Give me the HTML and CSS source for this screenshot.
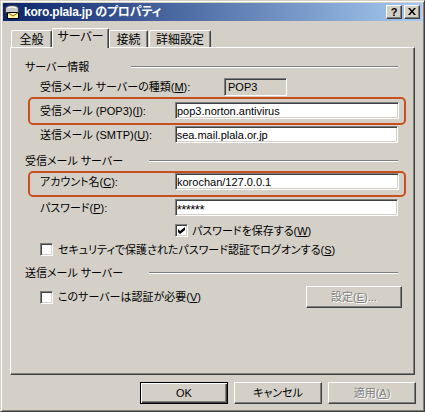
FILE: index.html
```html
<!DOCTYPE html>
<html lang="ja">
<head>
<meta charset="utf-8">
<title>koro.plala.jp のプロパティ</title>
<link rel="stylesheet" href="styles.css">
</head>
<body>
<div class="window">
  <div class="titlebar">
    <svg class="ticon" width="16" height="16" viewBox="0 0 16 16">
      <path d="M1.5 8.5 L1.5 5 Q1.5 1.5 8 1.5 Q14.5 1.5 14.5 5 L14.5 8.5 Z" fill="#c8c8c8" stroke="#404040"/>
      <path d="M3.5 4 Q8 2 12.5 4" stroke="#ffffff" fill="none"/>
      <rect x="3.5" y="8.5" width="11" height="6" fill="#fff5a0" stroke="#000"/>
      <path d="M3.5 8.5 L9 12 L14.5 8.5" fill="none" stroke="#806000"/>
    </svg>
    <span class="title">koro.plala.jp のプロパティ</span>
    <div class="tbtns">
      <span class="tbtn">?</span>
      <span class="tbtn">
        <svg width="8" height="7" viewBox="0 0 8 7"><path d="M0 0h2l2 2.5 2-2.5h2L5 3.5 8 7H6L4 4.5 2 7H0l3-3.5z" fill="#000"/></svg>
      </span>
    </div>
  </div>

  <div class="tabs">
    <div class="tab t1">全般</div>
    <div class="tab t2 active">サーバー</div>
    <div class="tab t3">接続</div>
    <div class="tab t4">詳細設定</div>
  </div>

  <div class="panel">
    <div class="group"><span class="glabel g-short">サーバー情報</span><span class="gline"></span></div>

    <div class="row row-type">
      <span class="lbl lbl-type">受信メール サーバーの種類(<u>M</u>):</span>
      <span class="ro">POP3</span>
    </div>

    <div class="hl hl-a">
      <div class="row">
        <span class="lbl">受信メール (POP3)(<u>I</u>):</span>
        <span class="field">pop3.norton.antivirus</span>
      </div>
    </div>

    <div class="row row-ind row-smtp">
      <span class="lbl">送信メール (SMTP)(<u>U</u>):</span>
      <span class="field">sea.mail.plala.or.jp</span>
    </div>

    <div class="group group-2"><span class="glabel">受信メール サーバー</span><span class="gline"></span></div>

    <div class="hl hl-b">
      <div class="row">
        <span class="lbl">アカウント名(<u>C</u>):</span>
        <span class="field">korochan/127.0.0.1</span>
      </div>
    </div>

    <div class="row row-ind row-pass">
      <span class="lbl">パスワード(<u>P</u>):</span>
      <span class="field field-pass">******</span>
    </div>

    <div class="check check-save">
      <span class="box"><svg width="7" height="7" viewBox="0 0 7 7"><path d="M0 2l2 2 5-4v3L2 7 0 5z" fill="#000"/></svg></span>
      <span class="ctext">パスワードを保存する(<u>W</u>)</span>
    </div>

    <div class="check check-sec">
      <span class="box"></span>
      <span class="ctext">セキュリティで保護されたパスワード認証でログオンする(<u>S</u>)</span>
    </div>

    <div class="group group-3"><span class="glabel">送信メール サーバー</span><span class="gline"></span></div>

    <div class="row-auth">
      <div class="check">
        <span class="box"></span>
        <span class="ctext">このサーバーは認証が必要(<u>V</u>)</span>
      </div>
      <span class="btn btn-set disabled">設定(<u>E</u>)...</span>
    </div>
  </div>

  <div class="buttons">
    <span class="btn default">OK</span>
    <span class="btn">キャンセル</span>
    <span class="btn disabled">適用(<u>A</u>)</span>
  </div>
</div>
</body>
</html>
```

FILE: styles.css
```css
* { box-sizing: border-box; }

html, body {
  margin: 0;
  padding: 0;
}

body {
  width: 425px;
  height: 412px;
  background: #d4d0c8;
  font-family: "Liberation Sans", "Noto Sans CJK JP", sans-serif;
  font-size: 11px;
  line-height: 14px;
  color: #000;
  font-feature-settings: "palt";
}

u { text-decoration: underline; text-underline-offset: 1px; }

.window {
  width: 425px;
  height: 412px;
  background: #d4d0c8;
  border: 1px solid;
  border-color: #d4d0c8 #404040 #404040 #d4d0c8;
  box-shadow: inset 1px 1px #ffffff, inset -1px -1px #808080;
  padding: 2px;
  display: flex;
  flex-direction: column;
}

/* title bar */
.titlebar {
  height: 18px;
  display: flex;
  align-items: center;
  padding: 0 2px 0 1px;
  background: linear-gradient(to right, #0a246a, #a6caf0);
}

.ticon { flex: none; }

.title {
  margin-left: 4px;
  color: #fff;
  font-weight: bold;
  font-size: 12px;
  letter-spacing: -0.2px;
  white-space: nowrap;
}

.tbtns {
  margin-left: auto;
  display: flex;
  gap: 2px;
}

.tbtn {
  width: 16px;
  height: 14px;
  display: flex;
  align-items: center;
  justify-content: center;
  background: #d4d0c8;
  border: 1px solid;
  border-color: #ffffff #404040 #404040 #ffffff;
  box-shadow: inset -1px -1px #808080;
  font-family: "Liberation Sans", sans-serif;
  font-weight: bold;
  font-size: 11px;
  line-height: 12px;
  padding-bottom: 1px;
}

/* tabs */
.tabs {
  margin-top: 7px;
  height: 19px;
  display: flex;
  align-items: flex-end;
  padding-left: 8px;
}

.tab {
  height: 17px;
  display: flex;
  align-items: center;
  justify-content: center;
  background: #d4d0c8;
  border: 1px solid;
  border-bottom: 0;
  border-color: #ffffff #404040 transparent #ffffff;
  border-radius: 2px 2px 0 0;
  box-shadow: inset -1px 0 #808080;
  padding-top: 1px;
  font-size: 12px;
  white-space: nowrap;
}

.t1 { width: 41px; }
.t2 { width: 57px; }
.t3 { width: 39px; }
.t4 { width: 62px; margin-left: 1px; }

.tab.active {
  height: 20px;
  margin-bottom: -1px;
  position: relative;
  z-index: 1;
  padding-top: 0;
  padding-bottom: 3px;
}

/* panel */
.panel {
  margin: 0 7px 0 7px;
  height: 328px;
  border: 1px solid;
  border-color: #ffffff #404040 #404040 #ffffff;
  box-shadow: inset -1px -1px #808080;
  padding: 12px 16px 0 14px;
  display: flex;
  flex-direction: column;
}

.group {
  height: 14px;
  display: flex;
  align-items: center;
}

.glabel {
  width: 124px;
  white-space: nowrap;
}

.glabel.g-short { width: 106px; }

.gline {
  flex: 1;
  height: 2px;
  border-top: 1px solid #808080;
  border-bottom: 1px solid #ffffff;
}

.group-2 { margin-top: 11px; }
.group-3 { margin-top: 10px; }

.row {
  display: flex;
  align-items: center;
  height: 17px;
}

.row-ind { padding-left: 15px; }

.lbl {
  width: 135px;
  white-space: nowrap;
}

.row-type {
  margin-top: 4px;
  height: 18px;
  padding-left: 15px;
}

.lbl-type { width: 184px; }

.ro {
  width: 63px;
  height: 18px;
  border: 1px solid;
  border-color: #808080 #ffffff #ffffff #808080;
  box-shadow: inset 1px 1px #404040;
  padding: 1px 0 0 3px;
  line-height: 15px;
}

.field {
  width: 224px;
  height: 17px;
  background: #fff;
  border: 1px solid;
  border-color: #808080 #ffffff #ffffff #808080;
  box-shadow: inset 1px 1px #404040, inset -1px -1px #d4d0c8;
  padding: 1px 0 0 1px;
  line-height: 14px;
  white-space: nowrap;
  overflow: hidden;
}

.field-pass {
  font-size: 13px;
  line-height: 17px;
  padding-top: 1px;
  letter-spacing: -0.5px;
}

.hl {
  margin-left: 3px;
  margin-right: -8px;
  border: 2px solid #c8501c;
  border-radius: 5px;
  padding: 3px 4px 4px 10px;
}

.hl-a { margin-top: 1px; }
.hl-b { margin-top: 3px; padding-top: 0; padding-bottom: 5px; }

.row-smtp { margin-top: 1px; }
.row-pass { margin-top: 2px; }

.check {
  display: flex;
  align-items: center;
  height: 13px;
  white-space: nowrap;
}

.box {
  width: 13px;
  height: 13px;
  flex: none;
  background: #fff;
  border: 1px solid;
  border-color: #808080 #ffffff #ffffff #808080;
  box-shadow: inset 1px 1px #404040, inset -1px -1px #d4d0c8;
  display: flex;
  align-items: center;
  justify-content: center;
}

.ctext { margin-left: 5px; }

.check-save {
  margin-top: 8px;
  padding-left: 150px;
}

.check-save .ctext { margin-left: 4px; }

.check-sec {
  margin-top: 6px;
  padding-left: 15px;
}

.row-auth {
  margin-top: 6px;
  height: 22px;
  display: flex;
  align-items: center;
  justify-content: space-between;
  padding-left: 15px;
  margin-right: -4px;
}

/* buttons */
.btn {
  width: 88px;
  height: 22px;
  display: flex;
  align-items: center;
  justify-content: center;
  background: #d4d0c8;
  border: 1px solid;
  border-color: #ffffff #404040 #404040 #ffffff;
  box-shadow: inset -1px -1px #808080;
  white-space: nowrap;
}

.btn.default {
  border-color: #000;
  box-shadow: inset 1px 1px #ffffff, inset -1px -1px #404040, inset -2px -2px #808080;
}

.btn.disabled {
  color: #808080;
  text-shadow: 1px 1px #ffffff;
}

.btn-set { width: 96px; }

.buttons {
  margin-top: 7px;
  display: flex;
  justify-content: flex-end;
  gap: 6px;
  padding-right: 6px;
}
```
